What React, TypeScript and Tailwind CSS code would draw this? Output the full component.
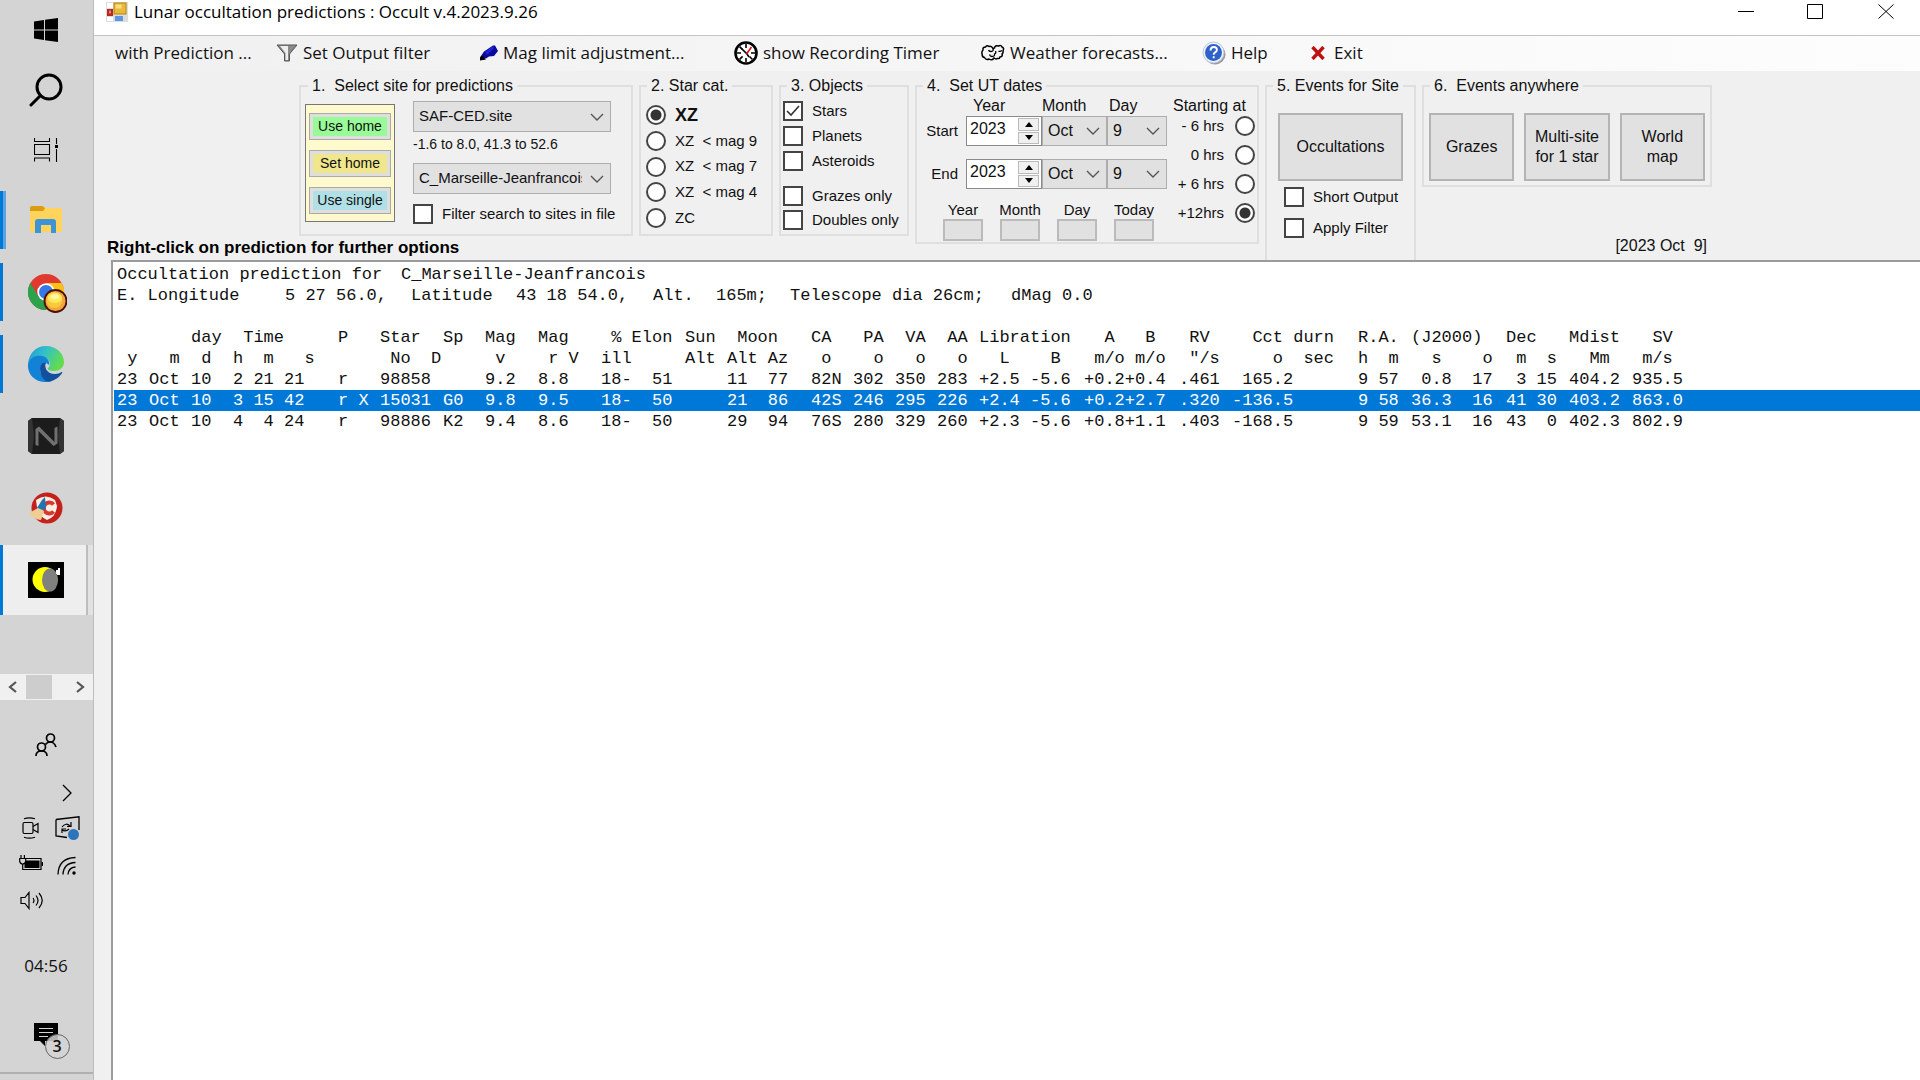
import React from "react";

const CHAR_WIDTH = 10.5;
const span = (chars: number) => ({ width: Math.round(chars * CHAR_WIDTH) });

/* Each report column: width in characters, two header lines, three event lines. */
type Column = [number, string, string, string, string, string];
const columns: Column[] = [
  [3, "", " y", "23", "23", "23"],
  [4, "", "  m", "Oct", "Oct", "Oct"],
  [4, "day", " d", "10", "10", "10"],
  [10, " Time", "h  m   s", "2 21 21", "3 15 42", "4  4 24"],
  [4, "P", "", "r", "r X", "r"],
  [6, "Star", " No  D", "98858", "15031", "98886"],
  [4, "Sp", "", "", "G0", "K2"],
  [5, "Mag", " v", "9.2", "9.8", "9.4"],
  [6, "Mag", " r V", "8.8", "9.5", "8.6"],
  [8, " % Elon", "ill", "18-  51", "18-  50", "18-  50"],
  [4, "Sun", "Alt", "", "", ""],
  [8, " Moon", "Alt Az", "11  77", "21  86", "29  94"],
  [4, "CA", " o", "82N", "42S", "76S"],
  [4, " PA", "  o", "302", "246", "280"],
  [4, " VA", "  o", "350", "295", "329"],
  [4, " AA", "  o", "283", "226", "260"],
  [10, "Libration", "  L    B", "+2.5 -5.6", "+2.4 -5.6", "+2.3 -5.6"],
  [9, "  A   B", " m/o m/o", "+0.2+0.4", "+0.2+2.7", "+0.8+1.1"],
  [5, " RV", ' "/s', ".461", ".320", ".403"],
  [12, "  Cct durn", "    o  sec", " 165.2", "-136.5", "-168.5"],
  [5, "R.A.", "h  m", "9 57", "9 58", "9 59"],
  [9, "(J2000)", "  s    o", " 0.8  17", "36.3  16", "53.1  16"],
  [6, "Dec", " m  s", " 3 15", "41 30", "43  0"],
  [6, "Mdist", "  Mm", "404.2", "403.2", "402.3"],
  [5, "  SV", " m/s", "935.5", "863.0", "802.9"],
];

const siteLine: [number, string][] = [
  [16, "E. Longitude"],
  [12, "5 27 56.0,"],
  [10, "Latitude"],
  [13, "43 18 54.0,"],
  [6, "Alt."],
  [7, "165m;"],
  [21, "Telescope dia 26cm;"],
  [8, "dMag 0.0"],
];

function Chevron() {
  return (
    <svg viewBox="0 0 14 8" className="pointer-events-none absolute right-[6px] top-1/2 h-2 w-3.5 -translate-y-1/2" fill="none" stroke="#555" strokeWidth="1.4">
      <path d="M1 1l6 6 6-6" />
    </svg>
  );
}

function Dropdown({ label, options, className }: { label: string; options: string[]; className: string }) {
  return (
    <div className={`relative border border-[#adadad] bg-[#e1e1e1] ${className}`}>
      <select aria-label={label} className="h-full w-full appearance-none overflow-hidden bg-transparent pl-[5px] pr-[28px] outline-none">
        {options.map((o) => (
          <option key={o}>{o}</option>
        ))}
      </select>
      <Chevron />
    </div>
  );
}

function Check({ label, checked = false }: { label: string; checked?: boolean }) {
  return (
    <label className="flex h-5 items-center gap-[9px] whitespace-nowrap text-[15px]">
      <span className="relative block size-5">
        <input type="checkbox" defaultChecked={checked} className="peer block size-5 appearance-none border-2 border-[#444] bg-white" />
        <svg viewBox="0 0 20 20" className="pointer-events-none absolute inset-0 hidden size-5 peer-checked:block" fill="none" stroke="#333" strokeWidth="1.6">
          <path d="M4 10l4 4 8-9" />
        </svg>
      </span>
      {label}
    </label>
  );
}

const radioClass =
  "size-5 shrink-0 appearance-none rounded-full border-2 border-[#444] bg-white checked:bg-[radial-gradient(circle,#333_5px,white_6px)]";

function Year({ label }: { label: string }) {
  return (
    <div className="flex h-[30px] w-[76px] border border-[#8a8a8a] bg-white p-px">
      <input aria-label={label} defaultValue="2023" className="w-[50px] min-w-0 bg-transparent pb-1 pl-[2px] text-[16px] outline-none" />
      <div className="flex w-[21px] flex-col gap-px">
        <button aria-label={`${label} up`} className="flex flex-1 items-center justify-center border border-[#bbb] bg-[#f0f0f0]">
          <svg viewBox="0 0 8 5" className="h-[5px] w-2"><path d="M4 0l4 5H0z" /></svg>
        </button>
        <button aria-label={`${label} down`} className="flex flex-1 items-center justify-center border border-[#bbb] bg-[#f0f0f0]">
          <svg viewBox="0 0 8 5" className="h-[5px] w-2"><path d="M4 5l4-5H0z" /></svg>
        </button>
      </div>
    </div>
  );
}

function Group({ title, className, legend, children }: { title: string; className: string; legend: string; children: React.ReactNode }) {
  return (
    <fieldset className={`min-w-0 self-start border-2 border-[#dfdfdf] ${className}`}>
      <legend className={`whitespace-pre px-1 text-[16px] leading-5 ${legend}`}>{title}</legend>
      {children}
    </fieldset>
  );
}

function TaskButton({ label, bar, active, children }: { label: string; bar?: string; active?: boolean; children: React.ReactNode }) {
  return (
    <button aria-label={label} className="relative flex h-[72px] w-full items-center justify-center pr-px">
      {active && <span className="absolute inset-x-0 inset-y-px border-r-[5px] border-[#e2e2e2] bg-[#eeeeee] shadow-[inset_-2px_0_0_#bdbdbd]" />}
      {bar && <span className={`absolute left-0 ${bar}`} />}
      <span className="relative">{children}</span>
    </button>
  );
}

function Sidebar() {
  return (
    <nav aria-label="Taskbar" className="flex w-[94px] shrink-0 flex-col border-r border-[#bcbcbc] bg-[#d4d4d4]">
      <button aria-label="Start" className="flex h-[60px] items-center justify-center pr-px">
        <svg viewBox="0 0 24 24" className="size-6">
          <path d="M0 3.4L10 2v9.5H0zM11 1.8L24 0v11.5H11zM0 12.5h10V22L0 20.6zM11 12.5h13V24l-13-1.8z" />
        </svg>
      </button>
      <button aria-label="Search" className="flex h-[60px] items-center justify-center pr-px">
        <svg viewBox="0 0 34 34" className="size-[34px]" fill="none" stroke="#000" strokeWidth="3" strokeLinecap="round">
          <circle cx="20" cy="14" r="12" />
          <path d="M11.5 22.5L2 32" />
        </svg>
      </button>
      <button aria-label="Task view" className="flex h-[64px] items-start justify-center pr-px pt-[18px]">
        <svg viewBox="0 0 24 24" className="size-6" fill="none" stroke="#000" strokeWidth="1.1">
          <path d="M.5 0v3.5h15V0M.5 6.5h15v10H.5zM.5 23.500v-3.500h15v3.500M22.500 0v6M22.500 11v13" />
          <path d="M21 7h3v3h-3z" fill="#000" stroke="none" />
        </svg>
      </button>
      <TaskButton label="File Explorer" bar="h-[58px] w-1.5 border-r-[3px] border-[#5ba3e0] bg-[#0078d7]">
        <svg viewBox="0 0 32 28" className="h-7 w-8">
          <path d="M0 2q0-2 2-2h11l3 2h16v24H0z" fill="#ffd35c" />
          <path d="M0 2q0-2 2-2h10q2 0 3 2.500L13 5H0z" fill="#dc9c12" />
          <path d="M5 27V16q0-3 3-3h15q3 0 3 3v11h-5v-8H11v8z" fill="#3c93d6" />
        </svg>
      </TaskButton>
      <TaskButton label="Chrome" bar="h-[58px] w-[3px] bg-[#0078d7]">
        <svg viewBox="0 0 39 39" className="ml-[2px] mt-[2px] size-[39px]">
          <circle cx="18" cy="18" r="18" fill="#e0392f" />
          <path d="M2.400 9A18 18 0 0 0 18 36l8-14-8 4-8-4z" fill="#2ba24c" />
          <path d="M18 36A18 18 0 0 0 33.600 9H18l8 13z" fill="#fbc116" />
          <circle cx="18" cy="18" r="8.700" fill="#fff" />
          <circle cx="18" cy="18" r="7" fill="#3579e6" />
          <circle cx="27.500" cy="27" r="11" fill="#f3a53a" stroke="#4b0e08" strokeWidth="1.800" />
          <circle cx="26.500" cy="26" r="8" fill="#fbc93e" />
          <ellipse cx="27" cy="24" rx="7" ry="5" fill="#ffe95c" />
          <ellipse cx="27" cy="22.500" rx="4" ry="2.500" fill="#fff6a8" />
        </svg>
      </TaskButton>
      <TaskButton label="Edge" bar="h-[58px] w-[3px] bg-[#0078d7]">
        <svg viewBox="0 0 36 36" className="size-9">
          <defs>
            <linearGradient id="edgeTop" x1="0" y1="0" x2="1" y2=".4">
              <stop offset="0" stopColor="#2196d8" />
              <stop offset=".5" stopColor="#33c1c8" />
              <stop offset="1" stopColor="#62dc4e" />
            </linearGradient>
          </defs>
          <path d="M0 18C1 7 8 0 18 0c11 0 18 8 18 16 0 6-5 9-10 9-4 0-7-1-6-3 3-2 3-9-4-11C8 9 2 12 0 18z" fill="url(#edgeTop)" />
          <path d="M0 18C2 11 8 9 14 10c6 1 8 6 7 9-3-4-9-2-9 4 0 7 6 12 12 12C11 39-1 31 0 18z" fill="#1182d6" />
          <path d="M12 22c0-4 3-6 6-5-2 3 0 11 9 11 3 0 5-1 6.500-2 .8-.4 1 .3.600 1C30 33 24 36 19 35.500 14 33 12 27 12 22z" fill="#124f9e" />
        </svg>
      </TaskButton>
      <TaskButton label="N">
        <svg viewBox="0 0 36 36" className="size-9">
          <path d="M4 0h28l4 3v30l-4 3H4l-4-3V3z" fill="#1c1c1c" />
          <path d="M4 0L6 18 4 36l-4-3V3zM32 0l-2 18 2 18 4-3V3z" fill="#333" />
          <path d="M7.500 27V11l3.500-2.500 15.500 15.500V10l3-1.500v17l-4 2.500L10.500 13v15z" fill="#707070" />
        </svg>
      </TaskButton>
      <TaskButton label="CCleaner">
        <svg viewBox="0 0 34 34" className="size-[34px]">
          <circle cx="18" cy="17" r="15.500" fill="#c5211c" />
          <path d="M7 9q10-7 19 0l2 6q-1 11-10 14Q8 25 7 9z" fill="#f7efe4" />
          <path d="M24.500 13.500a5.500 5.500 0 1 0 0 7" fill="none" stroke="#d8392f" strokeWidth="4" />
          <path d="M13 9l3-3 1 12-6 1-3-2z" fill="#1d76b4" />
          <path d="M0 22l9-5 6 3-3 9q-7 0-12-7z" fill="#f0cd94" />
        </svg>
      </TaskButton>
      <TaskButton label="Occult" active bar="inset-y-px w-[3px] bg-[#0078d7]">
        <svg viewBox="0 0 36 36" className="size-9">
          <path d="M0 0h36v36H0z" />
          <circle cx="17" cy="17.500" r="12.500" fill="#ff0" />
          <ellipse cx="22" cy="18" rx="8" ry="11.500" fill="#808080" />
          <path d="M28 8h2V6h2v7h-3v-1h-1z" fill="#fff" />
        </svg>
      </TaskButton>
      <div className="mt-[58px] flex h-[26px] items-center justify-between bg-[#f0f0f0] px-2">
        <svg viewBox="0 0 9 12" className="h-3 w-[9px]" fill="none" stroke="#555" strokeWidth="2.200"><path d="M8 1L2 6l6 5" /></svg>
        <span className="mr-[16px] h-6 w-[26px] bg-[#cdcdcd]" />
        <svg viewBox="0 0 9 12" className="h-3 w-[9px]" fill="none" stroke="#555" strokeWidth="2.200"><path d="M1 1l6 5-6 5" /></svg>
      </div>
      <div className="flex h-[76px] items-center justify-center pr-px pt-[14px]">
        <svg viewBox="0 0 22 24" className="h-6 w-[22px]" fill="none" stroke="#000" strokeWidth="1.700">
          <circle cx="15.500" cy="5" r="4" />
          <circle cx="6.500" cy="14" r="4" />
          <path d="M1 23q0-5 5.500-5t5.500 5M10.500 11.500Q12 9 15.500 9t5.500 5" />
        </svg>
      </div>
      <div className="grid grid-cols-[31px_31px] justify-center gap-x-[5px] pl-[5px]">
        <span />
        <svg viewBox="0 0 10 18" className="mb-[9px] mt-2 h-[18px] w-2.5 justify-self-center" fill="none" stroke="#000" strokeWidth="1.300"><path d="M1 1l8 8-8 8" /></svg>
        <svg viewBox="0 0 18 22" className="mt-[6px] h-[22px] w-[18px] justify-self-center" fill="none" stroke="#000" strokeWidth="1.200">
          <rect x="1" y="5.500" width="10" height="11" rx="1.500" />
          <path d="M11 9.500l5-3v9l-5-3M2 1.800q5-2 11 0M2 20.200q5 2 11 0" />
        </svg>
        <svg viewBox="0 0 25 24" className="mt-[5px] h-6 w-[25px] justify-self-center">
          <path d="M1 3.500L24 .800V14M12 21.500L1 20V3.500" fill="none" stroke="#000" strokeWidth="1.300" />
          <path d="M7 11q4-5 8-1m1-4v4.500h-4M14 13q-3 3-7 1m0 3v-4h4" fill="none" stroke="#000" strokeWidth="1.200" />
          <circle cx="18.500" cy="18.500" r="5.500" fill="#2e74ba" />
        </svg>
        <svg viewBox="0 0 25 16" className="mt-[15px] h-4 w-[25px] justify-self-center">
          <path d="M6 3.500h16v11H4" fill="none" stroke="#000" strokeWidth="1.200" />
          <path d="M7 5.500h13.500v7.500H5.500V9zM22.500 7h1.500v4h-1.500z" />
          <path d="M.700 3.500h6v3Q6 9 3.700 9T.700 6.500zM2 0v3.500M5.400 0v3.500M3.700 9v6" fill="none" stroke="#000" strokeWidth="1.200" />
        </svg>
        <svg viewBox="0 0 20 19" className="mt-[16px] h-[19px] w-5 justify-self-center" fill="none" stroke="#000" strokeWidth="1.300">
          <path d="M1 18.500Q1.500 2 18.500 1.500M6 18.500Q6.500 7 18.500 6.500M11 18.500q.5-7 7.500-7.500" />
          <circle cx="17" cy="17" r="1.700" fill="#000" stroke="none" />
        </svg>
        <svg viewBox="0 0 23 19" className="mt-[16px] h-[19px] w-[23px] justify-self-center" fill="none" stroke="#000" strokeWidth="1.200">
          <path d="M1 6.500h4l4-5v16l-4-5H1zM13 7q2 2.500 0 5M16 4.500q4 5 0 10M19 2q6.500 7.500 0 15" />
        </svg>
      </div>
      <time className="mt-[44px] pr-px text-center font-['Open_Sans',sans-serif] text-[17px] leading-6">04:56</time>
      <button aria-label="Notifications" className="relative ml-[34px] mt-[45px] block size-[38px]">
        <svg viewBox="0 0 38 38" className="size-[38px]">
          <path d="M0 0h24v18H11v5l-5-5H0z" />
          <path d="M5 5.500h14M5 9.500h14M5 13.500h9" stroke="#d4d4d4" strokeWidth="1.200" />
          <circle cx="23.500" cy="23.500" r="12" fill="#d4d4d4" fillOpacity=".85" stroke="#666" />
        </svg>
        <span className="absolute left-[11px] top-[11px] w-6 text-center font-['Open_Sans',sans-serif] text-[16px] font-semibold leading-6">3</span>
      </button>
      <span className="mt-[11px] h-0.5 bg-[#b0b0b0]" />
    </nav>
  );
}

function MenuItem({ children, icon, className }: { children: React.ReactNode; icon?: React.ReactNode; className: string }) {
  return (
    <button className={`flex items-center gap-[5px] whitespace-nowrap text-left ${className}`}>
      {icon}
      {children}
    </button>
  );
}

export default function App() {
  const siteButtons = [
    ["Use home", "bg-[#98fb98]"],
    ["Set home", "bg-[#f0e68c]"],
    ["Use single", "bg-[#b0e0e6]"],
  ];
  const cats = ["XZ", "XZ  < mag 9", "XZ  < mag 7", "XZ  < mag 4", "ZC"];
  const bigButton = "flex h-[68px] items-center justify-center whitespace-nowrap border-2 border-[#b4b4b4] bg-[#e1e1e1] text-center text-[16px] leading-5";
  return (
    <div className="flex min-h-screen bg-[#f0f0f0] font-['Liberation_Sans',Arial,sans-serif] text-[#111]">
      <Sidebar />
      <div className="flex min-w-0 flex-1 flex-col">
        <header className="flex h-9 items-start justify-between border-b border-[#c4c4c4] bg-white pl-3 font-['Open_Sans',sans-serif] text-black">
          <h1 className="flex items-center gap-[6px] whitespace-nowrap text-[17px] font-normal leading-6">
            <svg viewBox="0 0 22 20" className="h-5 w-[22px]">
              <path d="M0 0h22v20H0z" fill="#ddd" />
              <path d="M1 1h6v5H1zM1 15h6v4H1z" fill="#fff" />
              <rect x="8" y="1" width="12" height="11" fill="#e9b93a" stroke="#b8860b" />
              <path d="M9.500 2.500h6v4h-6z" fill="#f8dc86" />
              <rect x="1" y="7" width="6" height="7" fill="#b5281e" />
              <path d="M3 8.500h2v3H3z" fill="#e88078" />
              <rect x="9" y="14" width="8" height="5" fill="#5b95e6" />
            </svg>
            Lunar occultation predictions : Occult v.4.2023.9.26
          </h1>
          <div className="flex pr-[26px] pt-1">
            <button aria-label="Minimize" className="mr-[53px]"><svg viewBox="0 0 16 16" className="size-4" stroke="#000"><path d="M0 7.500h16" /></svg></button>
            <button aria-label="Maximize" className="mr-[55px]"><svg viewBox="0 0 16 16" className="size-4" fill="none" stroke="#000"><path d="M.5.500h15v14H.5z" /></svg></button>
            <button aria-label="Close"><svg viewBox="0 0 16 16" className="size-4" fill="none" stroke="#000"><path d="M.5.500l15 14M15.500.500L.5 14.500" /></svg></button>
          </div>
        </header>
        <div role="menubar" className="flex h-[35px] items-center bg-linear-to-r from-[#f0f0f0] to-[#fdfdfd] pb-px pl-[21px] font-['Open_Sans',sans-serif] text-[17px]">
          <MenuItem className="w-[161px]">with Prediction ...</MenuItem>
          <MenuItem
            className="w-[204px]"
            icon={
              <svg viewBox="0 0 22 18" className="h-[18px] w-[22px] shrink-0">
                <path d="M1 1h20l-7.500 9v7h-5v-7z" fill="#8a8a8a" stroke="#555" />
                <path d="M4 2h8v14H9.500V9z" fill="#eee" />
              </svg>
            }
          >
            Set Output filter
          </MenuItem>
          <MenuItem
            className="w-[254px]"
            icon={
              <svg viewBox="0 0 18 16" className="h-4 w-[18px] shrink-0">
                <path d="M0 12.500l4-6 9-6h2l3 5.500-4 5-5 .500-3 2z" fill="#0a0a9c" />
                <path d="M5 7l8-6 1 2-7 7z" fill="#2222d8" />
                <path d="M0 15.500v-3l2-2 4 4z" />
              </svg>
            }
          >
            Mag limit adjustment...
          </MenuItem>
          <MenuItem
            className="w-[247px]"
            icon={
              <svg viewBox="0 0 24 24" className="size-6 shrink-0" fill="none" stroke="#000">
                <circle cx="12" cy="12" r="10.500" strokeWidth="2.600" fill="#fff" />
                <path d="M12 3v4M12 17v4M3 12h4M17 12h4M5.600 5.600l3 3M15.500 15.500l3 3M5.600 18.400l3-3" strokeWidth="1.600" />
                <path d="M8 8l5 5 2 3" strokeWidth="1.600" />
                <path d="M12.500 13l5-7" stroke="#e01010" strokeWidth="1.600" />
              </svg>
            }
          >
            show Recording Timer
          </MenuItem>
          <MenuItem
            className="w-[221px]"
            icon={
              <svg viewBox="0 0 24 18" className="h-[18px] w-6 shrink-0" fill="none" stroke="#000" strokeWidth="1.500">
                <path d="M12 4.500Q10.500 1.500 8 2.500 6 .800 4.500 3 1.500 3 2 6 .200 8 1.200 10.500 1 13 3.500 13.500 5 16.500 8 15q3 2 5-1 1.500 1.500 3.500.500 2 .500 2.500-1.500 3-.500 2-3 1.500-1 1-3 1.500-3-1-4Q20 .800 17.500 2 14 1 13.500 4z" />
                <path d="M12 4.500q1 3-2 3-2 0-2.500-1.500M14.500 7q1 2-1 3 .500 2.500-2.500 2.500-2 0-2.500-2M21 6.500q-2 1.500-3.500.500" strokeWidth="1.300" />
              </svg>
            }
          >
            Weather forecasts...
          </MenuItem>
          <MenuItem
            className="w-[109px]"
            icon={
              <svg viewBox="0 0 24 24" className="size-6 shrink-0">
                <ellipse cx="13" cy="13.500" rx="10.500" ry="10" fill="#9a9a9a" />
                <circle cx="11.500" cy="11.500" r="10.500" fill="#eef2fb" stroke="#bcc6dc" />
                <circle cx="11.500" cy="11.500" r="8.500" fill="#2f62c8" />
                <path d="M8.500 9.500q0-3.500 3.200-3.500t3.200 2.800q0 1.700-1.800 2.500-1.500.8-1.400 2.500M11.700 15.200v2" fill="none" stroke="#fff" strokeWidth="1.900" />
              </svg>
            }
          >
            Help
          </MenuItem>
          <MenuItem
            className="gap-[9px]"
            icon={
              <svg viewBox="0 0 14 14" className="size-3.5 shrink-0" stroke="#bd1111" strokeWidth="3.400">
                <path d="M1.500 1l11 12M12.500 1l-11 12" />
              </svg>
            }
          >
            Exit
          </MenuItem>
        </div>
        <section className="grid h-[189px] shrink-0 grid-cols-[186px_334px_134px_130px_344px_151px_290px] grid-rows-[160px_24px] gap-x-1.5 overflow-hidden pl-[13px] pt-[5px]">
          <Group title="1.  Select site for predictions" className="col-start-2 h-[160px]" legend="ml-[7px]">
            <div className="flex pl-1">
              <div className="mt-2 flex h-[118px] w-[90px] flex-col justify-center gap-[10px] border border-[#777] bg-[#fffacd] px-[3px]">
                {siteButtons.map(([t, c]) => (
                  <button key={t} className="h-[27px] border border-[#aaa] bg-[#dedede] p-[3px]">
                    <span className={`block whitespace-nowrap text-[14px] leading-[19px] ${c}`}>{t}</span>
                  </button>
                ))}
              </div>
              <div className="ml-[18px] mt-[5px] w-[198px]">
                <Dropdown label="Site file" className="h-[31px] text-[15px]" options={["SAF-CED.site"]} />
                <p className="h-[31px] whitespace-nowrap text-[14px] leading-6">-1.6 to 8.0, 41.3 to 52.6</p>
                <Dropdown label="Site" className="mb-[10px] h-[31px] text-[15px]" options={["C_Marseille-Jeanfrancois"]} />
                <Check label="Filter search to sites in file" />
              </div>
            </div>
          </Group>
          <Group title="2. Star cat." className="h-[160px]" legend="ml-[6px]">
            <div className="mt-[9px] flex h-[123px] flex-col justify-between pl-[5px]">
              {cats.map((c, i) => (
                <label key={c} className={`flex h-5 items-center gap-[9px] whitespace-pre ${i === 0 ? "text-[18px] font-bold" : "text-[15px]"}`}>
                  <input type="radio" name="cat" defaultChecked={i === 0} className={radioClass} />
                  {c}
                </label>
              ))}
            </div>
          </Group>
          <Group title="3. Objects" className="h-[160px]" legend="ml-[6px]">
            <div className="flex flex-col gap-[5px] pl-[2px] pt-[5px]">
              <Check label="Stars" checked />
              <Check label="Planets" />
              <Check label="Asteroids" />
              <div className="mt-[10px] flex flex-col gap-1">
                <Check label="Grazes only" />
                <Check label="Doubles only" />
              </div>
            </div>
          </Group>
          <Group title="4.  Set UT dates" className="row-span-2 h-[168px]" legend="ml-[6px]">
            <div className="flex text-[15px]">
              <div className="w-[250px] shrink-0">
                <div className="grid h-5 grid-cols-[50px_75px_67px_58px] text-[16px] leading-5">
                  <span />
                  <span className="pl-[6px]">Year</span>
                  <span>Month</span>
                  <span>Day</span>
                </div>
                {["Start", "End"].map((r) => (
                  <div key={r} className="mb-[13px] flex h-[30px] items-center">
                    <span className="w-[49px] pr-[8px] text-right">{r}</span>
                    <Year label={`${r} year`} />
                    <Dropdown label={`${r} month`} className="h-[30px] w-[65px] text-[16px]" options={["Oct"]} />
                    <Dropdown label={`${r} day`} className="h-[30px] w-[60px] text-[16px]" options={["9"]} />
                  </div>
                ))}
                <div className="-mt-[2px] flex gap-[17px] pl-[26px]">
                  {["Year", "Month", "Day", "Today"].map((t) => (
                    <label key={t} className="flex w-10 flex-col items-center leading-[19px]">
                      {t}
                      <button className="block h-[22px] w-10 border-2 border-[#bbb] bg-[#e1e1e1]" />
                    </label>
                  ))}
                </div>
              </div>
              <div className="w-[88px] shrink-0">
                <div className="whitespace-nowrap pl-[6px] text-[16px] leading-5">Starting at</div>
                <div className="flex h-[107px] flex-col justify-between">
                  {["- 6 hrs", "0 hrs", "+ 6 hrs", "+12hrs"].map((t, i) => (
                    <label key={t} className="flex h-5 items-center justify-end gap-[11px] whitespace-nowrap">
                      {t}
                      <input type="radio" name="start" defaultChecked={i === 3} className={radioClass} />
                    </label>
                  ))}
                </div>
              </div>
            </div>
          </Group>
          <Group title="5. Events for Site" className="row-span-2 h-[190px]" legend="ml-[6px]">
            <div className="px-[11px] pt-[17px]">
              <button className={`${bigButton} w-full`}>Occultations</button>
              <div className="mt-[6px] flex flex-col gap-[11px] pl-[6px]">
                <Check label="Short Output" />
                <Check label="Apply Filter" />
              </div>
            </div>
          </Group>
          <Group title="6.  Events anywhere" className="h-[111px]" legend="ml-[6px]">
            <div className="grid grid-cols-3 gap-[10px] px-[5px] pt-[17px]">
              <button className={bigButton}>Grazes</button>
              <button className={bigButton}>Multi-site<br />for 1 star</button>
              <button className={bigButton}>World<br />map</button>
            </div>
          </Group>
          <p className="col-span-4 col-start-1 row-start-2 whitespace-nowrap text-[17px] font-bold leading-6 text-black">
            Right-click on prediction for further options
          </p>
          <p className="col-start-7 row-start-2 whitespace-pre pr-[5px] text-right text-[16px] leading-5">[2023 Oct  9]</p>
        </section>
        <main className="ml-[17px] flex-1 overflow-hidden border-l-2 border-t-2 border-[#9a9a9f] bg-white pl-px pt-[2px] font-['Liberation_Mono',monospace] text-[17px] leading-[21px]">
          <p className="flex h-[21px] whitespace-pre pl-[3px]">
            <span style={span(27)}>Occultation prediction for</span>
            <span>C_Marseille-Jeanfrancois</span>
          </p>
          <p className="mb-[21px] flex h-[21px] whitespace-pre pl-[3px]">
            {siteLine.map(([n, t]) => (
              <span key={t} className="shrink-0" style={span(n)}>{t}</span>
            ))}
          </p>
          <table className="w-full table-fixed border-collapse">
            <colgroup>
              <col className="w-[3px]" />
              {columns.map(([n], i) => (
                <col key={i} style={span(n)} />
              ))}
              <col />
            </colgroup>
            <tbody>
              {[1, 2, 3, 4, 5].map((r) => (
                <tr key={r} className={`h-[21px] ${r === 4 ? "bg-[#0078d7] text-white" : ""}`}>
                  <td />
                  {columns.map((c, i) => (r < 3 ? (
                    <th key={i} className="whitespace-pre p-0 text-left font-normal">{c[r]}</th>
                  ) : (
                    <td key={i} className="whitespace-pre p-0">{c[r]}</td>
                  )))}
                  <td />
                </tr>
              ))}
            </tbody>
          </table>
        </main>
      </div>
    </div>
  );
}
